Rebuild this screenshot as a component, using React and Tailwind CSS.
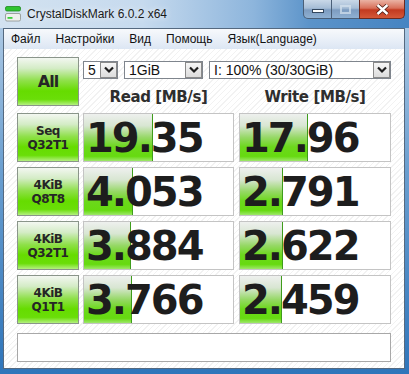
import React from 'react'

const rows = [
  { l1: 'Seq', l2: 'Q32T1', read: '19.35', readBar: 69, write: '17.96', writeBar: 68 },
  { l1: '4KiB', l2: 'Q8T8', read: '4.053', readBar: 49, write: '2.791', writeBar: 43 },
  { l1: '4KiB', l2: 'Q32T1', read: '3.884', readBar: 47, write: '2.622', writeBar: 43 },
  { l1: '4KiB', l2: 'Q1T1', read: '3.766', readBar: 48, write: '2.459', writeBar: 42 },
]

const greenBtn =
  'border border-[#8a958a] bg-[linear-gradient(to_bottom,#f3f7f1_0%,#d4ecc6_22%,#8fe04a_48%,#66dc00_70%,#6ade08_88%,#b4f080_100%)] flex flex-col items-center justify-center text-[#262626] font-bold'

function Chevron() {
  return (
    <svg width="12" height="8" viewBox="0 0 12 8">
      <polyline points="2,1.5 6,5.5 10,1.5" fill="none" stroke="#1e1e1e" strokeWidth="2.2" />
    </svg>
  )
}

function Combo({ width, text }) {
  return (
    <div className={`${width} h-[18px] border border-[#7f858d] bg-white flex items-center`}>
      <span className="pl-[4px] flex-1 text-[14px] leading-none text-[#111] font-['Liberation_Sans',Arial,sans-serif] whitespace-nowrap">
        {text}
      </span>
      <div className="w-[17px] h-[16px] border border-[#8a8a8a] bg-[linear-gradient(to_bottom,#f6f6f6,#dcdcdc)] flex items-center justify-center">
        <Chevron />
      </div>
    </div>
  )
}

function Cell({ width, value, bar }) {
  return (
    <div className={`relative ${width} h-[49px] border border-[#c4c4c4] bg-white`}>
      <div
        className="absolute left-0 top-0 bottom-0 border-r border-[#3f9c1c] bg-[linear-gradient(to_bottom,#eef0ee_0%,#d8e6d2_25%,#96d866_50%,#6cd81c_70%,#66da10_90%,#9ee86a_100%)]"
        style={{ width: bar }}
      />
      <div className="relative h-full flex items-center pl-[2px] pt-[1px] text-[40px] leading-none tracking-[-2px] font-bold text-[#1d1d1d] font-['DejaVu_Sans',sans-serif]">
        {value}
      </div>
    </div>
  )
}

function AppIcon() {
  return (
    <svg width="16" height="16" viewBox="0 0 16 16">
      <rect x="0.5" y="0.5" width="15" height="4.5" rx="1.5" fill="#2fc42f" stroke="#1f8a1f" strokeWidth="0.8" />
      <rect x="0.5" y="7.5" width="15" height="7.5" rx="1.5" fill="#eef0ee" stroke="#8a8f8a" strokeWidth="0.8" />
      <rect x="2.5" y="11" width="5" height="1.8" fill="#3bd13b" />
    </svg>
  )
}

export default function App() {
  return (
    <div className="w-[409px] h-[374px] overflow-hidden flex flex-col bg-[linear-gradient(to_bottom,#b8d0e8_0%,#6b9fd0_45%,#2f75ba_100%)]">
      <div className="h-[28px] flex items-start bg-[linear-gradient(to_right,#d3e2f0_0%,#c6daee_35%,#8db5dc_62%,#5b93c9_76%,#4684c2_100%)]">
        <div className="flex items-center h-[28px] pl-[5px]">
          <AppIcon />
          <span className="ml-[6px] text-[12px] text-[#1a1a1a] font-['Liberation_Sans',Arial,sans-serif] [text-shadow:0_0_6px_#ffffff]">
            CrystalDiskMark 6.0.2 x64
          </span>
        </div>
        <div className="ml-auto mr-[4px] flex">
          <div className="w-[29px] h-[19px] rounded-bl-[5px] border border-t-0 border-[#4a5f78] bg-[linear-gradient(to_bottom,#c9d8e8_0%,#a6bdd6_45%,#7d9cc0_55%,#8fb0d2_100%)] flex items-center justify-center">
            <div className="w-[12px] h-[4px] bg-white border border-[#33475e] mt-[4px]" />
          </div>
          <div className="w-[27px] h-[19px] border-b border-[#4a5f78] bg-[linear-gradient(to_bottom,#c9d8e8_0%,#a6bdd6_45%,#7d9cc0_55%,#8fb0d2_100%)] flex items-center justify-center">
            <div className="w-[11px] h-[9px] border-[2px] border-[#d6e2ee] bg-transparent opacity-70" />
          </div>
          <div className="w-[46px] h-[19px] rounded-br-[5px] border border-t-0 border-[#6a2a20] bg-[linear-gradient(to_bottom,#eab3a4_0%,#d8705a_45%,#c23a20_55%,#d45838_100%)] flex items-center justify-center">
            <svg width="13" height="11" viewBox="0 0 13 11">
              <path d="M1.5 1 L11.5 10 M11.5 1 L1.5 10" stroke="#4a1a12" strokeWidth="4" />
              <path d="M1.5 1 L11.5 10 M11.5 1 L1.5 10" stroke="#ffffff" strokeWidth="2.4" />
            </svg>
          </div>
        </div>
      </div>

      <div className="flex-1 ml-[3px] mr-[4px] mb-[5px] border border-[#55697f] flex flex-col bg-[repeating-linear-gradient(135deg,#ffffff_0px,#ffffff_3px,#f2f2f2_3px,#f2f2f2_4px)]">
        <div className="h-[20px] flex items-center gap-[15px] pl-[7px] text-[12px] text-[#111] font-['Liberation_Sans',Arial,sans-serif] bg-[linear-gradient(to_bottom,#f7f9fc_0%,#eaf0f8_50%,#dce6f3_100%)]">
          <span>Файл</span>
          <span>Настройки</span>
          <span>Вид</span>
          <span>Помощь</span>
          <span>Язык(Language)</span>
        </div>

        <div className="pl-[13px] pt-[8px] flex flex-col gap-[5px]">
          <div className="flex gap-[4px]">
            <div className={`${greenBtn} w-[62px] h-[49px] text-[16px] tracking-[-1px] font-['DejaVu_Sans',sans-serif]`}>
              All
            </div>
            <div className="w-[308px] flex flex-col">
              <div className="mt-[4px] flex gap-[6px]">
                <Combo width="w-[35px]" text="5" />
                <Combo width="w-[79px]" text="1GiB" />
                <Combo width="w-[182px]" text="I: 100% (30/30GiB)" />
              </div>
              <div className="mt-[7px] h-[22px] flex gap-[5px] text-[15px] font-bold tracking-[-0.4px] text-[#2e2e2e] font-['DejaVu_Sans',sans-serif]">
                <div className="w-[151px] flex items-center justify-center">Read [MB/s]</div>
                <div className="w-[152px] flex items-center justify-center">Write [MB/s]</div>
              </div>
            </div>
          </div>

          {rows.map((r, i) => (
            <div key={i} className="flex">
              <div className={`${greenBtn} w-[62px] h-[49px] text-[12px] leading-[14px] tracking-[-0.5px] font-['DejaVu_Sans',sans-serif]`}>
                <span>{r.l1}</span>
                <span>{r.l2}</span>
              </div>
              <div className="ml-[4px]">
                <Cell width="w-[151px]" value={r.read} bar={r.readBar} />
              </div>
              <div className="ml-[5px]">
                <Cell width="w-[152px]" value={r.write} bar={r.writeBar} />
              </div>
            </div>
          ))}

          <div className="mt-[4px] w-[374px] h-[29px] border border-[#a8a8a8] bg-white" />
        </div>
      </div>
    </div>
  )
}
